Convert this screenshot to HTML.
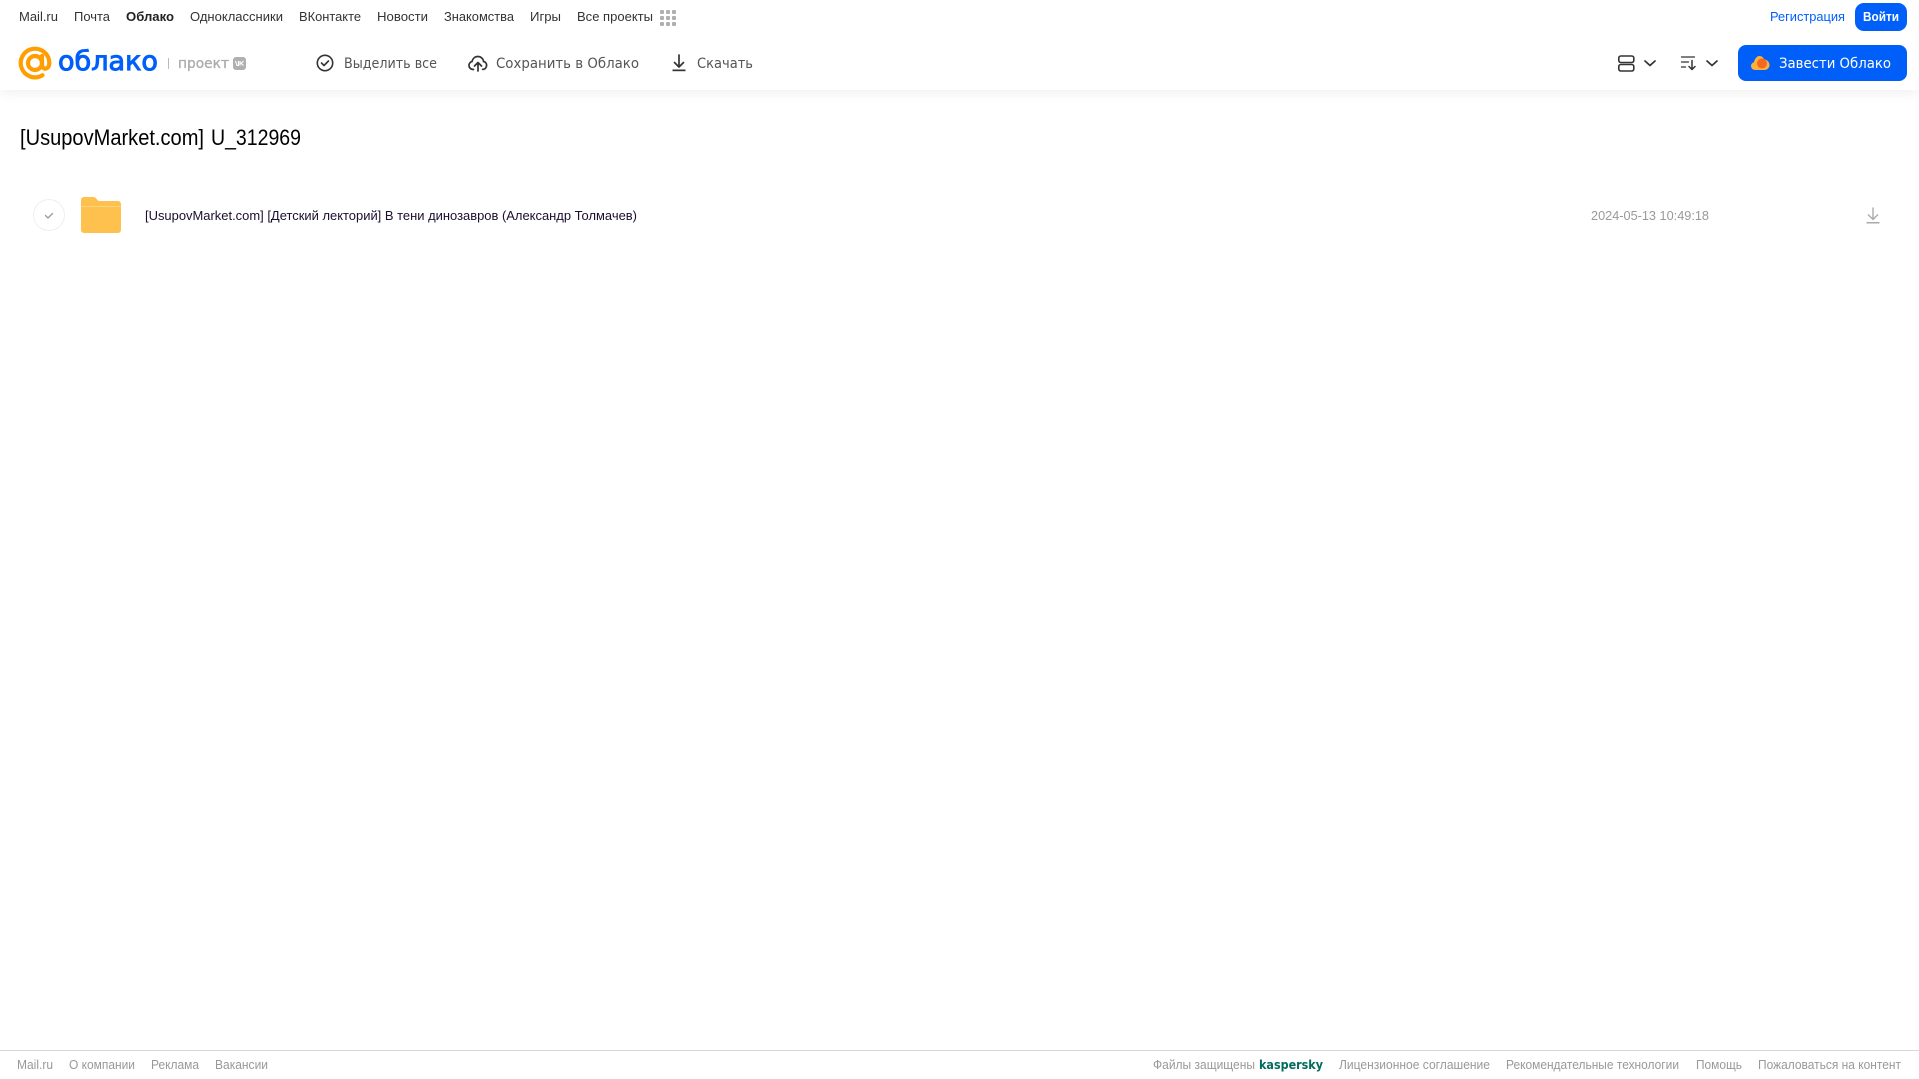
<!DOCTYPE html>
<html lang="ru"><head><meta charset="utf-8"><title>Облако</title>
<style>
html,body{margin:0;padding:0;background:#fff;width:1919px;height:1079px;overflow:hidden}
.hdr{position:absolute;left:0;top:0;width:1919px;height:90px;background:#fff;box-shadow:0 2px 12px rgba(0,0,0,.07)}
svg{position:absolute;left:0;top:0}
text{font-family:"Liberation Sans",Arial,sans-serif}
.n{font-size:13px;fill:#333}
.t{font-family:"DejaVu Sans","Liberation Sans",sans-serif;font-size:14px;fill:#555}
.f{font-size:12.500px;fill:#999}
</style></head><body>
<div class="hdr"></div>
<svg width="1919" height="1079" viewBox="0 0 1919 1079" xmlns="http://www.w3.org/2000/svg">
<text class="n" x="19" y="21" textLength="39" lengthAdjust="spacingAndGlyphs">Mail.ru</text>
<text class="n" x="74" y="21" textLength="36" lengthAdjust="spacingAndGlyphs">Почта</text>
<text class="n" x="126" y="21" textLength="48" lengthAdjust="spacingAndGlyphs" font-weight="700" style="fill:#222">Облако</text>
<text class="n" x="190" y="21" textLength="93" lengthAdjust="spacingAndGlyphs">Одноклассники</text>
<text class="n" x="299" y="21" textLength="62" lengthAdjust="spacingAndGlyphs">ВКонтакте</text>
<text class="n" x="377" y="21" textLength="51" lengthAdjust="spacingAndGlyphs">Новости</text>
<text class="n" x="444" y="21" textLength="70" lengthAdjust="spacingAndGlyphs">Знакомства</text>
<text class="n" x="530" y="21" textLength="31" lengthAdjust="spacingAndGlyphs">Игры</text>
<text class="n" x="577" y="21" textLength="76" lengthAdjust="spacingAndGlyphs">Все проекты</text>
<g fill="#b0b0b0"><rect x="660" y="10" width="4" height="4" rx="1"/><rect x="666" y="10" width="4" height="4" rx="1"/><rect x="672" y="10" width="4" height="4" rx="1"/><rect x="660" y="16" width="4" height="4" rx="1"/><rect x="666" y="16" width="4" height="4" rx="1"/><rect x="672" y="16" width="4" height="4" rx="1"/><rect x="660" y="22" width="4" height="4" rx="1"/><rect x="666" y="22" width="4" height="4" rx="1"/><rect x="672" y="22" width="4" height="4" rx="1"/></g>
<text class="n" x="1770" y="21" textLength="75" lengthAdjust="spacingAndGlyphs" style="fill:#005ff9">Регистрация</text>
<rect x="1855" y="3" width="52" height="28" rx="9" fill="#005ff9"/>
<text class="n" x="1863" y="21" textLength="36" lengthAdjust="spacingAndGlyphs" font-weight="700" style="fill:#fff">Войти</text>

<!-- logo -->
<g fill="none" stroke="#ff9e00" stroke-width="4.200" stroke-linecap="round"><circle cx="35" cy="63" r="7"/><path d="M42 56v8.500c0 6 7.300 5.500 7.300 -1.500a14.300 14.300 0 1 0 -6.800 12.200"/></g>
<text x="58" y="70" font-size="27" textLength="100" lengthAdjust="spacingAndGlyphs" style="font-family:'DejaVu Sans',sans-serif;fill:#005ff9;stroke:#005ff9;stroke-width:1px">облако</text>
<rect x="168" y="58" width="1" height="11" fill="#bbb"/>
<text x="178" y="68" font-size="14" textLength="51" lengthAdjust="spacingAndGlyphs" style="font-family:'DejaVu Sans',sans-serif;fill:#ababab;stroke:#ababab;stroke-width:.3px">проект</text>
<rect x="233" y="57" width="13" height="13" rx="3" fill="#b0b0b0"/>
<path d="M235.500 61l1.500 4.500h1.500v-4.500M243.500 61l-2.500 2.200 2.500 2.300M240 61v4.500" fill="none" stroke="#fff" stroke-width="1.100"/>

<!-- toolbar -->
<circle cx="325" cy="63" r="7.700" fill="none" stroke="#333" stroke-width="1.600"/>
<path d="M321.500 63l2.500 2.500 4.500-4.500" fill="none" stroke="#333" stroke-width="1.600" stroke-linecap="round" stroke-linejoin="round"/>
<text class="t" x="344" y="68" textLength="93" lengthAdjust="spacingAndGlyphs">Выделить все</text>
<path d="M473.500 69.500c-3 0-4.500-2-4.500-4 0-2.200 1.600-3.800 3-4 .7-3 3-5 5.800-5 3 0 5.300 2 5.800 5 1.900.3 3 2 3 3.900 0 2-1.500 4-4 4" fill="none" stroke="#333" stroke-width="1.700" stroke-linecap="round"/>
<path d="M478 71v-8M474.500 66l3.500-3.500 3.500 3.500" fill="none" stroke="#333" stroke-width="1.700" stroke-linecap="round" stroke-linejoin="round"/>
<text class="t" x="496" y="68" textLength="143" lengthAdjust="spacingAndGlyphs">Сохранить в Облако</text>
<path d="M679 55v12M674.500 62.500l4.500 4.500 4.500-4.500" fill="none" stroke="#333" stroke-width="1.700" stroke-linecap="round" stroke-linejoin="round"/>
<rect x="672.500" y="69.500" width="13" height="1.700" fill="#333"/>
<text class="t" x="697" y="68" textLength="56" lengthAdjust="spacingAndGlyphs">Скачать</text>

<rect x="1618.800" y="56" width="15" height="6.500" rx="2" fill="none" stroke="#333" stroke-width="1.600"/>
<rect x="1618.800" y="64.500" width="15" height="6.500" rx="2" fill="none" stroke="#333" stroke-width="1.600"/>
<path d="M1645 61l5 4.500 5-4.500" fill="none" stroke="#333" stroke-width="1.700" stroke-linecap="round" stroke-linejoin="round"/>
<path d="M1681.500 57h13M1681.500 62h7M1681.500 67h4" fill="none" stroke="#333" stroke-width="1.300" stroke-linecap="round"/>
<path d="M1692 60.500v8.500M1689 66.500l3 3 3-3" fill="none" stroke="#333" stroke-width="1.500" stroke-linecap="round" stroke-linejoin="round"/>
<path d="M1707 61l5 4.500 5-4.500" fill="none" stroke="#333" stroke-width="1.700" stroke-linecap="round" stroke-linejoin="round"/>

<rect x="1738" y="45" width="169" height="36" rx="8" fill="#005ff9"/>
<path d="M1755.500 70c-2.700 0-4.500-1.800-4.500-4 0-1.900 1.300-3.400 3-3.800.5-3 2.700-6.200 5.500-6.200 2.300 0 3.800 1.400 4.600 3.400 2.900.2 5.400 2.700 5.400 5.600 0 2.800-2.200 5-5 5z" fill="#ffb03a"/>
<circle cx="1762" cy="63.500" r="5" fill="#f4691f"/>
<text class="t" x="1779" y="68" textLength="112" lengthAdjust="spacingAndGlyphs" style="fill:#fff">Завести Облако</text>

<!-- content -->
<text x="20" y="145" font-size="22" textLength="184" lengthAdjust="spacingAndGlyphs" style="fill:#000">[UsupovMarket.com]</text>
<text x="211" y="145" font-size="22" textLength="90" lengthAdjust="spacingAndGlyphs" style="fill:#000">U_312969</text>
<circle cx="49" cy="215" r="15.500" fill="#fff" stroke="#efefef" stroke-width="1"/>
<path d="M45.500 215.500l2.500 2.500 4.500-4.500" fill="none" stroke="#999" stroke-width="1.300" stroke-linecap="round" stroke-linejoin="round"/>
<path d="M81 200a3 3 0 0 1 3-3h9c2 0 3 1 4 2.500 .8 1.200 1.500 1.500 3 1.500h18a3 3 0 0 1 3 3v26a3 3 0 0 1-3 3H84a3 3 0 0 1-3-3z" fill="#ffc14d"/>
<rect x="81" y="206" width="40" height="1" fill="#ffd27f"/>
<text x="145" y="220" font-size="13" textLength="492" lengthAdjust="spacingAndGlyphs" style="fill:#1d0d2e">[UsupovMarket.com] [Детский лекторий] В тени динозавров (Александр Толмачев)</text>
<text x="1591" y="220" font-size="13" textLength="118" lengthAdjust="spacingAndGlyphs" style="fill:#999">2024-05-13 10:49:18</text>
<path d="M1873 207.500v12M1868 214.500l5 5 5-5" fill="none" stroke="#aaa" stroke-width="1.400" stroke-linejoin="round"/>
<rect x="1866.500" y="222" width="13" height="1.500" fill="#aaa"/>

<!-- footer -->
<rect x="0" y="1050" width="1919" height="1" fill="#d8d8d8"/>
<text class="f" x="17" y="1069" textLength="36" lengthAdjust="spacingAndGlyphs">Mail.ru</text>
<text class="f" x="69" y="1069" textLength="66" lengthAdjust="spacingAndGlyphs">О компании</text>
<text class="f" x="151" y="1069" textLength="48" lengthAdjust="spacingAndGlyphs">Реклама</text>
<text class="f" x="215" y="1069" textLength="53" lengthAdjust="spacingAndGlyphs">Вакансии</text>
<text class="f" x="1153" y="1069" textLength="102" lengthAdjust="spacingAndGlyphs">Файлы защищены</text>
<text x="1259" y="1069" font-size="12" font-weight="700" textLength="64" lengthAdjust="spacingAndGlyphs" style="font-family:'DejaVu Sans',sans-serif;fill:#006d5c">kaspersky</text>
<text class="f" x="1339" y="1069" textLength="151" lengthAdjust="spacingAndGlyphs">Лицензионное соглашение</text>
<text class="f" x="1506" y="1069" textLength="173" lengthAdjust="spacingAndGlyphs">Рекомендательные технологии</text>
<text class="f" x="1696" y="1069" textLength="46" lengthAdjust="spacingAndGlyphs">Помощь</text>
<text class="f" x="1758" y="1069" textLength="143" lengthAdjust="spacingAndGlyphs">Пожаловаться на контент</text>
</svg>
</body></html>
